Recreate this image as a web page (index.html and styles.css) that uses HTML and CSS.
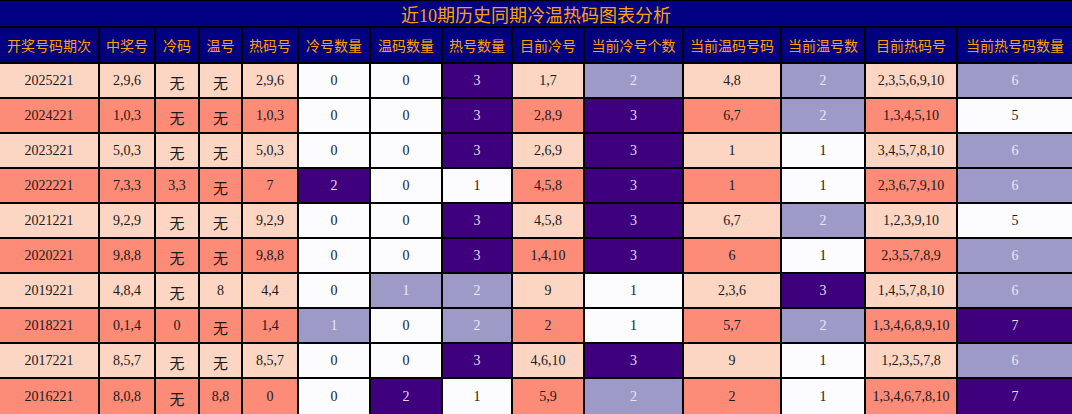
FILE: index.html
```html
<!DOCTYPE html>
<html lang="zh">
<head>
<meta charset="utf-8">
<title>近10期历史同期冷温热码图表分析</title>
<link rel="stylesheet" href="styles.css">
</head>
<body>
<div class="board">
  <div class="title">近10期历史同期冷温热码图表分析</div>
  <div class="hd">开奖号码期次</div><div class="hd">中奖号</div><div class="hd">冷码</div><div class="hd">温号</div><div class="hd">热码号</div><div class="hd">冷号数量</div><div class="hd">温码数量</div><div class="hd">热号数量</div><div class="hd">目前冷号</div><div class="hd">当前冷号个数</div><div class="hd">当前温码号码</div><div class="hd">当前温号数</div><div class="hd">目前热码号</div><div class="hd">当前热号码数量</div>

  <div class="c p">2025221</div><div class="c p">2,9,6</div><div class="c p cj">无</div><div class="c p cj">无</div><div class="c p">2,9,6</div><div class="c w">0</div><div class="c w">0</div><div class="c d">3</div><div class="c p">1,7</div><div class="c l">2</div><div class="c p">4,8</div><div class="c l">2</div><div class="c p">2,3,5,6,9,10</div><div class="c l">6</div>

  <div class="c s">2024221</div><div class="c s">1,0,3</div><div class="c s cj">无</div><div class="c s cj">无</div><div class="c s">1,0,3</div><div class="c w">0</div><div class="c w">0</div><div class="c d">3</div><div class="c s">2,8,9</div><div class="c d">3</div><div class="c s">6,7</div><div class="c l">2</div><div class="c s">1,3,4,5,10</div><div class="c w">5</div>

  <div class="c p">2023221</div><div class="c p">5,0,3</div><div class="c p cj">无</div><div class="c p cj">无</div><div class="c p">5,0,3</div><div class="c w">0</div><div class="c w">0</div><div class="c d">3</div><div class="c p">2,6,9</div><div class="c d">3</div><div class="c p">1</div><div class="c w">1</div><div class="c p">3,4,5,7,8,10</div><div class="c l">6</div>

  <div class="c s">2022221</div><div class="c s">7,3,3</div><div class="c s">3,3</div><div class="c s cj">无</div><div class="c s">7</div><div class="c d">2</div><div class="c w">0</div><div class="c w">1</div><div class="c s">4,5,8</div><div class="c d">3</div><div class="c s">1</div><div class="c w">1</div><div class="c s">2,3,6,7,9,10</div><div class="c l">6</div>

  <div class="c p">2021221</div><div class="c p">9,2,9</div><div class="c p cj">无</div><div class="c p cj">无</div><div class="c p">9,2,9</div><div class="c w">0</div><div class="c w">0</div><div class="c d">3</div><div class="c p">4,5,8</div><div class="c d">3</div><div class="c p">6,7</div><div class="c l">2</div><div class="c p">1,2,3,9,10</div><div class="c w">5</div>

  <div class="c s">2020221</div><div class="c s">9,8,8</div><div class="c s cj">无</div><div class="c s cj">无</div><div class="c s">9,8,8</div><div class="c w">0</div><div class="c w">0</div><div class="c d">3</div><div class="c s">1,4,10</div><div class="c d">3</div><div class="c s">6</div><div class="c w">1</div><div class="c s">2,3,5,7,8,9</div><div class="c l">6</div>

  <div class="c p">2019221</div><div class="c p">4,8,4</div><div class="c p cj">无</div><div class="c p">8</div><div class="c p">4,4</div><div class="c w">0</div><div class="c l">1</div><div class="c l">2</div><div class="c p">9</div><div class="c w">1</div><div class="c p">2,3,6</div><div class="c d">3</div><div class="c p">1,4,5,7,8,10</div><div class="c l">6</div>

  <div class="c s">2018221</div><div class="c s">0,1,4</div><div class="c s">0</div><div class="c s cj">无</div><div class="c s">1,4</div><div class="c l">1</div><div class="c w">0</div><div class="c l">2</div><div class="c s">2</div><div class="c w">1</div><div class="c s">5,7</div><div class="c l">2</div><div class="c s">1,3,4,6,8,9,10</div><div class="c d">7</div>

  <div class="c p">2017221</div><div class="c p">8,5,7</div><div class="c p cj">无</div><div class="c p cj">无</div><div class="c p">8,5,7</div><div class="c w">0</div><div class="c w">0</div><div class="c d">3</div><div class="c p">4,6,10</div><div class="c d">3</div><div class="c p">9</div><div class="c w">1</div><div class="c p">1,2,3,5,7,8</div><div class="c l">6</div>

  <div class="c s">2016221</div><div class="c s">8,0,8</div><div class="c s cj">无</div><div class="c s">8,8</div><div class="c s">0</div><div class="c w">0</div><div class="c d">2</div><div class="c w">1</div><div class="c s">5,9</div><div class="c l">2</div><div class="c s">2</div><div class="c w">1</div><div class="c s">1,3,4,6,7,8,10</div><div class="c d">7</div>
</div>
</body>
</html>
```

FILE: styles.css
```css
html, body {
  margin: 0;
  padding: 0;
  background: #fff;
}

.board {
  width: 1072px;
  height: 414px;
  box-sizing: border-box;
  padding-top: 1px;
  background: #000;
  display: grid;
  grid-template-columns: 98px 54px 42px 41px 54px 70px 70px 68px 70px 97px 96px 82px 90px 114px;
  grid-template-rows: 25px 34px repeat(9, 33px) 35px;
  gap: 2px;
  font-family: "Liberation Serif", "Noto Sans CJK SC", serif;
  overflow: hidden;
}

.title {
  grid-column: 1 / -1;
  background: #000080;
  color: #ffa200;
  font-family: "Liberation Serif", "Noto Sans CJK SC", serif;
  font-size: 18px;
  display: flex;
  align-items: center;
  justify-content: center;
  padding-top: 1px;
}

.hd {
  background: #000080;
  color: #ffa200;
  font-size: 14px;
  display: flex;
  align-items: center;
  justify-content: center;
  white-space: nowrap;
}

.c {
  display: flex;
  align-items: center;
  justify-content: center;
  font-size: 14px;
  color: #1a1a1a;
  white-space: nowrap;
}

.cj {
  font-family: "Noto Sans CJK SC", sans-serif;
  font-size: 15px;
  padding-top: 3px;
}

.p { background: #fcd5c3; }
.s { background: #fc8b78; }
.w { background: #fcfbfd; }
.l { background: #9e9ac8; color: #e9e8f4; }
.d { background: #3f007d; color: #e6def0; }
```
